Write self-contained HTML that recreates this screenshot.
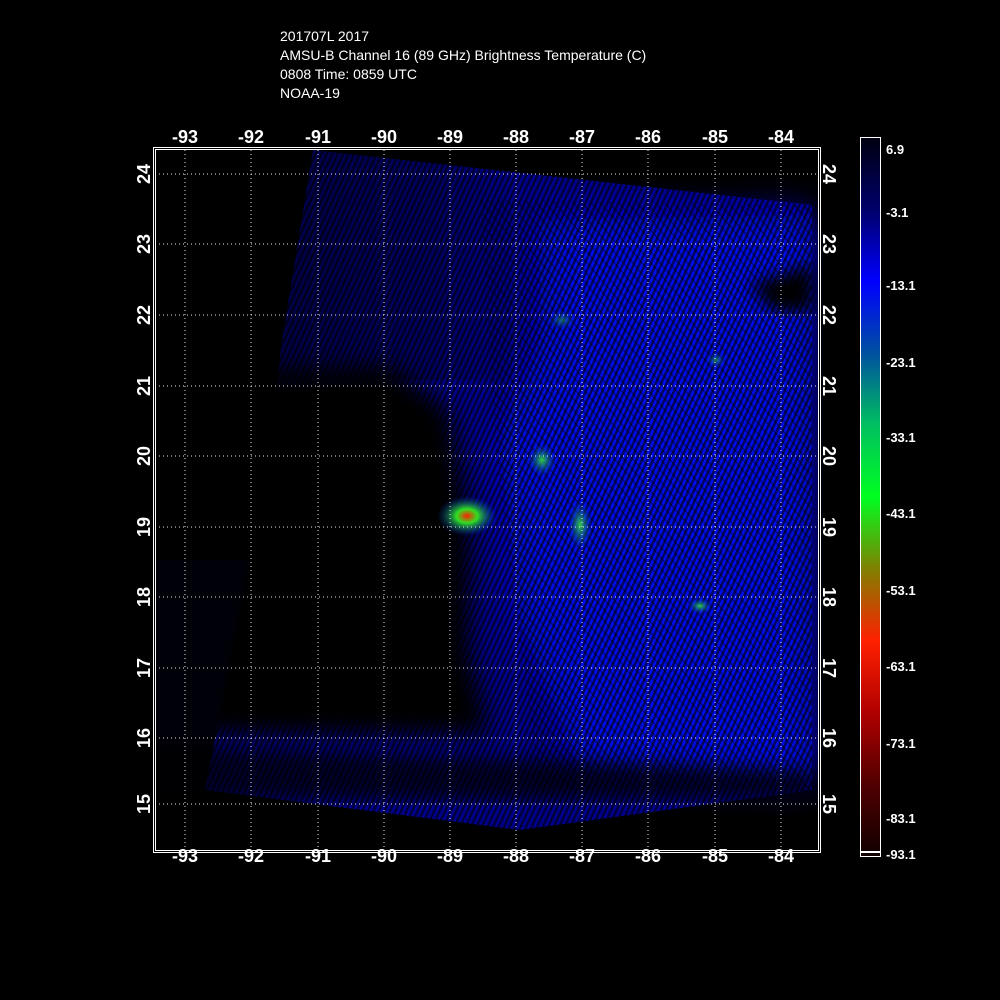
<!DOCTYPE html>
<html><head><style>
html,body{margin:0;padding:0;background:#000;width:1000px;height:1000px;overflow:hidden}
svg{display:block}
text{font-family:"Liberation Sans",sans-serif;fill:#fff}
</style></head><body>
<svg width="1000" height="1000" viewBox="0 0 1000 1000">
<defs>
<filter id="b8"><feGaussianBlur stdDeviation="8"/></filter>
<filter id="b12"><feGaussianBlur stdDeviation="12"/></filter>
<filter id="b15"><feGaussianBlur stdDeviation="18"/></filter>
<linearGradient id="cb" x1="0" y1="0" x2="0" y2="1">
<stop offset="0" stop-color="#000010"/>
<stop offset="0.1" stop-color="#00006a"/>
<stop offset="0.2" stop-color="#0000ff"/>
<stop offset="0.3" stop-color="#0050a0"/>
<stop offset="0.4" stop-color="#00c060"/>
<stop offset="0.5" stop-color="#00ff20"/>
<stop offset="0.6" stop-color="#808000"/>
<stop offset="0.7" stop-color="#ff2000"/>
<stop offset="0.8" stop-color="#b00000"/>
<stop offset="0.9" stop-color="#500000"/>
<stop offset="1" stop-color="#100000"/>
</linearGradient>
<linearGradient id="lt" x1="0" y1="0" x2="1" y2="0">
<stop offset="0" stop-color="#000" stop-opacity="0.55"/>
<stop offset="0.7" stop-color="#000" stop-opacity="0.3"/>
<stop offset="1" stop-color="#000" stop-opacity="0"/>
</linearGradient>
<radialGradient id="g1"><stop offset="0" stop-color="#ff2000"/><stop offset="0.35" stop-color="#30e020"/><stop offset="1" stop-color="#0030c0" stop-opacity="0"/></radialGradient>
<radialGradient id="g2"><stop offset="0" stop-color="#30d040"/><stop offset="1" stop-color="#0030c0" stop-opacity="0"/></radialGradient>
<pattern id="st" width="5" height="5" patternUnits="userSpaceOnUse" patternTransform="rotate(25)">
<rect width="2.5" height="5" fill="#000" opacity="0.6"/></pattern>
<pattern id="st2" width="7" height="7" patternUnits="userSpaceOnUse" patternTransform="rotate(-40)">
<rect width="1.5" height="7" fill="#000" opacity="0.4"/></pattern>
<clipPath id="pc"><rect x="155" y="150" width="663" height="700"/></clipPath>
</defs>
<text x="280" y="41" font-size="14">201707L 2017</text>
<text x="280" y="60" font-size="14">AMSU-B Channel 16 (89 GHz) Brightness Temperature (C)</text>
<text x="280" y="79" font-size="14">0808 Time: 0859 UTC</text>
<text x="280" y="98" font-size="14">NOAA-19</text>
<g clip-path="url(#pc)">
<polygon points="313,150 812,205 812,790 520,830 205,790 247,555" fill="#000090"/>
<polygon points="540,220 812,215 812,780 580,770 520,620 500,440 540,340" fill="#0010ee" filter="url(#b15)"/>
<polygon points="250,150 520,150 520,380 250,380" fill="url(#lt)"/>
<polygon points="150,375 390,365 450,410 470,520 470,650 490,735 150,735" fill="#000" filter="url(#b12)"/>
<polygon points="150,150 300,150 260,560 150,560" fill="#000"/>
<polygon points="150,560 250,560 205,790 150,790" fill="#000008"/>
<polygon points="150,745 812,770 812,800 150,800" fill="#000" opacity="0.7" filter="url(#b8)"/>
<polygon points="750,285 812,265 812,310 775,312" fill="#000" filter="url(#b8)"/>
<polygon points="313,150 812,205 812,790 520,830 205,790 247,555" fill="url(#st)"/>
<polygon points="480,200 812,205 812,790 540,790 500,500" fill="url(#st2)"/>
<ellipse cx="467" cy="516" rx="30" ry="20" fill="url(#g1)"/>
<ellipse cx="542" cy="460" rx="14" ry="16" fill="url(#g2)"/>
<ellipse cx="580" cy="525" rx="12" ry="25" fill="url(#g2)"/>
<ellipse cx="700" cy="606" rx="12" ry="8" fill="url(#g2)"/>
<ellipse cx="716" cy="360" rx="10" ry="8" fill="url(#g2)" opacity="0.6"/>
<ellipse cx="562" cy="320" rx="14" ry="10" fill="url(#g2)" opacity="0.5"/>
</g>
<g stroke="#fff" stroke-width="1" stroke-dasharray="1,3" opacity="0.9">
<line x1="185" y1="150" x2="185" y2="850"/><line x1="251" y1="150" x2="251" y2="850"/>
<line x1="318" y1="150" x2="318" y2="850"/><line x1="384" y1="150" x2="384" y2="850"/>
<line x1="450" y1="150" x2="450" y2="850"/><line x1="516" y1="150" x2="516" y2="850"/>
<line x1="582" y1="150" x2="582" y2="850"/><line x1="648" y1="150" x2="648" y2="850"/>
<line x1="715" y1="150" x2="715" y2="850"/><line x1="781" y1="150" x2="781" y2="850"/>
<line x1="155" y1="174" x2="818" y2="174"/><line x1="155" y1="244" x2="818" y2="244"/>
<line x1="155" y1="315" x2="818" y2="315"/><line x1="155" y1="386" x2="818" y2="386"/>
<line x1="155" y1="456" x2="818" y2="456"/><line x1="155" y1="527" x2="818" y2="527"/>
<line x1="155" y1="597" x2="818" y2="597"/><line x1="155" y1="668" x2="818" y2="668"/>
<line x1="155" y1="738" x2="818" y2="738"/><line x1="155" y1="804" x2="818" y2="804"/>
</g>
<rect x="153.5" y="147.5" width="667" height="705" fill="none" stroke="#fff"/>
<rect x="155.5" y="149.5" width="663" height="701" fill="none" stroke="#fff"/>
<g font-size="18" text-anchor="middle" font-weight="bold">
<text x="185" y="143">-93</text><text x="251" y="143">-92</text><text x="318" y="143">-91</text><text x="384" y="143">-90</text><text x="450" y="143">-89</text><text x="516" y="143">-88</text><text x="582" y="143">-87</text><text x="648" y="143">-86</text><text x="715" y="143">-85</text><text x="781" y="143">-84</text>
<text x="185" y="862">-93</text><text x="251" y="862">-92</text><text x="318" y="862">-91</text><text x="384" y="862">-90</text><text x="450" y="862">-89</text><text x="516" y="862">-88</text><text x="582" y="862">-87</text><text x="648" y="862">-86</text><text x="715" y="862">-85</text><text x="781" y="862">-84</text>
</g>
<g font-size="18" text-anchor="middle" font-weight="bold">
<text transform="translate(150,174) rotate(-90)">24</text><text transform="translate(150,244) rotate(-90)">23</text><text transform="translate(150,315) rotate(-90)">22</text><text transform="translate(150,386) rotate(-90)">21</text><text transform="translate(150,456) rotate(-90)">20</text><text transform="translate(150,527) rotate(-90)">19</text><text transform="translate(150,597) rotate(-90)">18</text><text transform="translate(150,668) rotate(-90)">17</text><text transform="translate(150,738) rotate(-90)">16</text><text transform="translate(150,804) rotate(-90)">15</text>
<text transform="translate(823,174) rotate(90)">24</text><text transform="translate(823,244) rotate(90)">23</text><text transform="translate(823,315) rotate(90)">22</text><text transform="translate(823,386) rotate(90)">21</text><text transform="translate(823,456) rotate(90)">20</text><text transform="translate(823,527) rotate(90)">19</text><text transform="translate(823,597) rotate(90)">18</text><text transform="translate(823,668) rotate(90)">17</text><text transform="translate(823,738) rotate(90)">16</text><text transform="translate(823,804) rotate(90)">15</text>
</g>
<rect x="860.5" y="137.5" width="20" height="719" fill="url(#cb)" stroke="#fff"/>
<rect x="861" y="851" width="19" height="2" fill="#fff"/>
<g font-size="13" font-weight="bold">
<text x="886" y="154">6.9</text><text x="886" y="217">-3.1</text><text x="886" y="290">-13.1</text><text x="886" y="367">-23.1</text><text x="886" y="442">-33.1</text><text x="886" y="518">-43.1</text><text x="886" y="595">-53.1</text><text x="886" y="671">-63.1</text><text x="886" y="748">-73.1</text><text x="886" y="823">-83.1</text><text x="886" y="859">-93.1</text>
</g>
</svg>
</body></html>
